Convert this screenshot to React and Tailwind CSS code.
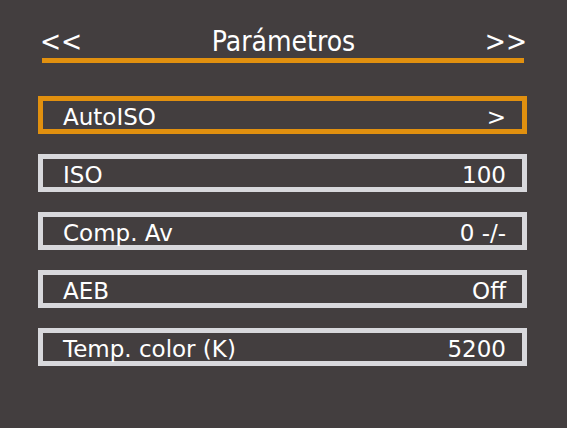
const rows = [
	{ label: 'AutoISO', value: '>', active: true },
	{ label: 'ISO', value: '100' },
	{ label: 'Comp. Av', value: '0 -/-' },
	{ label: 'AEB', value: 'Off' },
	{ label: 'Temp. color (K)', value: '5200' },
];

function Row({ label, value, active }) {
	return (
		<div
			className={
				active
					? 'h-[38px] border-[5px] border-[#e1900f] pl-[20px] pr-[16px] pt-[4px] flex justify-between'
					: 'h-[38px] border-[5px] border-[#d8d8dc] pl-[20px] pr-[16px] pt-[4px] flex justify-between'
			}
		>
			<span className="text-[23px] leading-[24px]">{label}</span>
			<span className="text-[23px] leading-[24px]">{value}</span>
		</div>
	);
}

export default function App() {
	return (
		<div
			className="w-[567px] h-[428px] bg-[#433e3f] text-white pl-[38px] pt-[26px] overflow-hidden"
			style={{ fontFamily: '"DejaVu Sans", Verdana, sans-serif' }}
		>
			<div className="w-[489px]">
				<div
					className="flex justify-between pl-[2px] text-[28px] leading-[32px]"
					style={{ fontFamily: '"DejaVu Sans Condensed", "DejaVu Sans", sans-serif', fontStretch: 'condensed' }}
				>
					<span>&lt;&lt;</span>
					<span>Parámetros</span>
					<span>&gt;&gt;</span>
				</div>
				<div className="h-[5px] bg-[#e1900f] ml-[4px] mr-[3px]" />
				<div className="mt-[33px] flex flex-col gap-[20px]">
					{rows.map((r) => (
						<Row key={r.label} {...r} />
					))}
				</div>
			</div>
		</div>
	);
}
